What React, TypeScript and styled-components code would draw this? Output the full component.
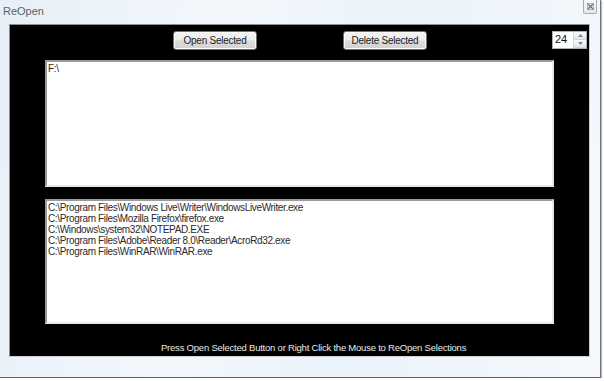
import styled, { createGlobalStyle } from "styled-components";

const GlobalStyle = createGlobalStyle`
  html, body {
    margin: 0;
    padding: 0;
    background: #ffffff;
  }
  body {
    font-family: "Liberation Sans", Arial, sans-serif;
  }
`;

const recent = [
  "C:\\Program Files\\Windows Live\\Writer\\WindowsLiveWriter.exe",
  "C:\\Program Files\\Mozilla Firefox\\firefox.exe",
  "C:\\Windows\\system32\\NOTEPAD.EXE",
  "C:\\Program Files\\Adobe\\Reader 8.0\\Reader\\AcroRd32.exe",
  "C:\\Program Files\\WinRAR\\WinRAR.exe",
];

function App() {
  return (
    <>
      <GlobalStyle />
      <Frame>
        <TitleBar>
          <Title>ReOpen</Title>
          <CloseButton>
            <svg width="7" height="7" viewBox="0 0 7 7">
              <path d="M0.5 0.5 L6.5 6.5 M6.5 0.5 L0.5 6.5" stroke="#6b7178" strokeWidth="1.2" />
              <rect x="0.5" y="0.5" width="6" height="6" fill="none" stroke="#9aa0a8" strokeWidth="0.8" />
            </svg>
          </CloseButton>
        </TitleBar>
        <Client>
          <Toolbar>
            <Button>Open Selected</Button>
            <Button $left={86}>Delete Selected</Button>
            <Spinner>
              <SpinValue>24</SpinValue>
              <SpinArrows>
                <SpinArrow>
                  <svg width="5" height="3" viewBox="0 0 5 3">
                    <path d="M0 3 L2.5 0 L5 3 Z" fill="#7d848c" />
                  </svg>
                </SpinArrow>
                <SpinArrow>
                  <svg width="5" height="3" viewBox="0 0 5 3">
                    <path d="M0 0 L2.5 3 L5 0 Z" fill="#7d848c" />
                  </svg>
                </SpinArrow>
              </SpinArrows>
            </Spinner>
          </Toolbar>
          <ListBox $height={126} $top={10}>
            <Item>F:\</Item>
          </ListBox>
          <ListBox $height={124} $top={12}>
            {recent.map((path) => (
              <Item key={path}>{path}</Item>
            ))}
          </ListBox>
          <Hint>Press Open Selected Button or Right Click the Mouse to ReOpen Selections</Hint>
        </Client>
      </Frame>
    </>
  );
}

const Frame = styled.div`
  width: 600px;
  height: 377px;
  display: flex;
  flex-direction: column;
  background: linear-gradient(100deg, #e6eff8 0%, #f4f8fc 35%, #eaf2fa 60%, #f6f9fc 100%);
  border-right: 1px solid #6e747a;
  border-bottom: 1px solid #5c6268;
  box-shadow: 1px 1px 1px #b8bcc0;
`;

const TitleBar = styled.div`
  height: 24px;
  display: flex;
  align-items: flex-start;
  justify-content: space-between;
`;

const Title = styled.div`
  margin: 5px 0 0 3px;
  font-family: "Liberation Sans", Arial, sans-serif;
  font-size: 11px;
  color: #5c6066;
`;

const CloseButton = styled.div`
  width: 12px;
  height: 13px;
  margin: 0 3px 0 0;
  border: 1px solid #a6abb2;
  border-top: none;
  border-radius: 0 0 2px 2px;
  background: linear-gradient(#fbfcfd, #e2e6eb);
  display: flex;
  align-items: center;
  justify-content: center;
`;

const Client = styled.div`
  margin-left: 9px;
  width: 579px;
  height: 331px;
  background: #000;
  border: 1px solid #8a9096;
  border-right-color: #c8ccd0;
  border-bottom-color: #d0d4d8;
  display: flex;
  flex-direction: column;
  align-items: flex-start;
`;

const Toolbar = styled.div`
  display: flex;
  align-items: flex-start;
  padding: 6px 0 0 163px;
`;

const Button = styled.div<{ $left?: number }>`
  width: 82px;
  height: 17px;
  margin-left: ${(p) => p.$left ?? 0}px;
  border: 1px solid #707070;
  border-radius: 3px;
  background: linear-gradient(#f4f4f4 0%, #ececec 48%, #dcdcdc 52%, #d2d2d2 100%);
  font-family: "Liberation Sans", Arial, sans-serif;
  font-size: 10px;
  letter-spacing: -0.25px;
  color: #1a1a1a;
  display: flex;
  align-items: center;
  justify-content: center;
  box-shadow: inset 0 0 0 1px #fbfbfb;
`;

const Spinner = styled.div`
  margin-left: 125px;
  width: 33px;
  height: 16px;
  display: flex;
  background: #fff;
  border: 1px solid #aab0b6;
`;

const SpinValue = styled.div`
  flex: 1;
  font-family: "Liberation Sans", Arial, sans-serif;
  font-size: 11px;
  color: #111;
  padding: 1px 0 0 2px;
`;

const SpinArrows = styled.div`
  width: 12px;
  display: flex;
  flex-direction: column;
  border-left: 1px solid #d8dce0;
`;

const SpinArrow = styled.div`
  flex: 1;
  display: flex;
  align-items: center;
  justify-content: center;
  background: linear-gradient(#f8f9fa, #e4e7ea);
  border-bottom: 1px solid #d0d4d8;
`;

const ListBox = styled.div<{ $height: number; $top: number }>`
  margin: ${(p) => p.$top}px 0 0 35px;
  width: 505px;
  height: ${(p) => p.$height - 4}px;
  background: #fff;
  border: 2px solid #9a9a9a;
  border-right-color: #e8e8e8;
  border-bottom-color: #e8e8e8;
  padding-top: 1px;
  box-sizing: content-box;
  overflow: hidden;
`;

const Item = styled.div`
  padding-left: 1px;
  font-family: "Liberation Sans", Arial, sans-serif;
  font-size: 10px;
  letter-spacing: -0.35px;
  line-height: 11px;
  color: #2a2a2a;
  white-space: nowrap;
`;

const Hint = styled.div`
  margin: 18px 0 0 151px;
  font-family: "Liberation Sans", Arial, sans-serif;
  font-size: 9.5px;
  letter-spacing: -0.22px;
  color: #e8e8e8;
  white-space: nowrap;
`;

export default App;
